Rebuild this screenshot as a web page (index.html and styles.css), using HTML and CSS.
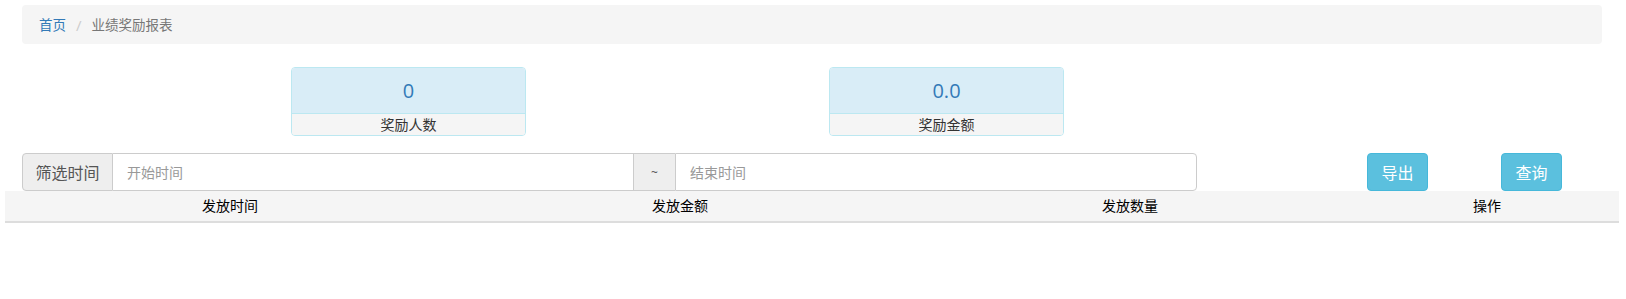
FILE: index.html
```html
<!DOCTYPE html>
<html lang="zh-CN">
<head>
  <meta charset="UTF-8">
  <meta name="viewport" content="width=device-width, initial-scale=1.0">
  <title>业绩奖励报表</title>
  <link rel="stylesheet" href="styles.css">
</head>
<body>
  <ol class="breadcrumb">
    <li><a href="#">首页</a></li>
    <li class="sep">/</li>
    <li class="active">业绩奖励报表</li>
  </ol>

  <div class="stats">
    <div class="stat-box first">
      <div class="stat-num">0</div>
      <div class="stat-label">奖励人数</div>
    </div>
    <div class="stat-box second">
      <div class="stat-num">0.0</div>
      <div class="stat-label">奖励金额</div>
    </div>
  </div>

  <div class="filter">
    <div class="input-group">
      <span class="addon addon-title">筛选时间</span>
      <input class="form-control" type="text" placeholder="开始时间">
      <span class="addon addon-tilde">~</span>
      <input class="form-control last" type="text" placeholder="结束时间">
    </div>
    <button class="btn btn-export">导出</button>
    <button class="btn btn-query">查询</button>
  </div>

  <!-- 列表表头 -->
  <div class="table-head">
    <div class="th">发放时间</div>
    <div class="th">发放金额</div>
    <div class="th">发放数量</div>
    <div class="th">操作</div>
  </div>
</body>
</html>
```

FILE: styles.css
```css
body {
  font-family: "Open Sans", "Noto Sans CJK SC", sans-serif;
  font-size: 14px;
  color: #333;
  background-color: #fff;
  margin: 0;
  padding: 0;
}
.breadcrumb {
  list-style: none;
  margin: 5px 24px 0 22px;
  padding: 0 17px;
  height: 39px;
  display: flex;
  align-items: center;
  background-color: #f5f5f5;
  border-radius: 4px;
  line-height: 20px;
  font-size: 13.5px;
}
.breadcrumb a {
  color: #337ab7;
  text-decoration: none;
}
.breadcrumb .sep {
  color: #ccc;
  font-size: 15px;
  padding: 0 10px;
}
.breadcrumb .active {
  color: #777;
}
.stats {
  display: flex;
  margin-top: 23px;
  padding-left: 291px;
}
.stat-box {
  width: 233px;
  border: 1px solid #bce8f1;
  border-radius: 4px;
  overflow: hidden;
  text-align: center;
}
.stat-box.second {
  margin-left: 303px;
}
.stat-num {
  height: 45px;
  line-height: 45px;
  font-size: 20px;
  color: #337ab7;
  background-color: #d9edf7;
  border-bottom: 1px solid #bce8f1;
}
.stat-label {
  height: 21px;
  line-height: 21px;
  background-color: #f5f5f5;
  color: #333;
}
.filter {
  display: flex;
  align-items: stretch;
  margin-top: 17px;
  padding-left: 22px;
  height: 38px;
}
.input-group {
  display: flex;
  width: 1175px;
}
.addon {
  display: flex;
  align-items: center;
  justify-content: center;
  background-color: #eee;
  border: 1px solid #ccc;
  color: #555;
  box-sizing: border-box;
}
.addon-title {
  width: 91px;
  font-size: 16px;
  border-radius: 4px 0 0 4px;
}
.addon-tilde {
  width: 41px;
  font-size: 12px;
  border-left: 0;
  border-right: 0;
}
.form-control {
  flex: 1;
  min-width: 0;
  border: 1px solid #ccc;
  border-left: 0;
  padding: 0 14px;
  font-family: inherit;
  font-size: 14px;
  color: #555;
  outline: none;
}
.form-control::placeholder {
  color: #999;
}
.form-control.last {
  border-left: 1px solid #ccc;
  border-radius: 0 4px 4px 0;
}
.btn {
  width: 61px;
  font-family: inherit;
  font-size: 16px;
  color: #fff;
  background-color: #5bc0de;
  border: 1px solid #46b8da;
  border-radius: 4px;
  cursor: pointer;
  padding: 0;
}
.btn-export {
  margin-left: 170px;
}
.btn-query {
  margin-left: 73px;
}
.table-head {
  display: grid;
  grid-template-columns: 450px 450px 450px 1fr;
  margin: 0 7px 0 5px;
  background-color: #f5f5f5;
  border-bottom: 2px solid #ddd;
}
.th {
  height: 30px;
  line-height: 30px;
  text-align: center;
  color: #000;
}
```
